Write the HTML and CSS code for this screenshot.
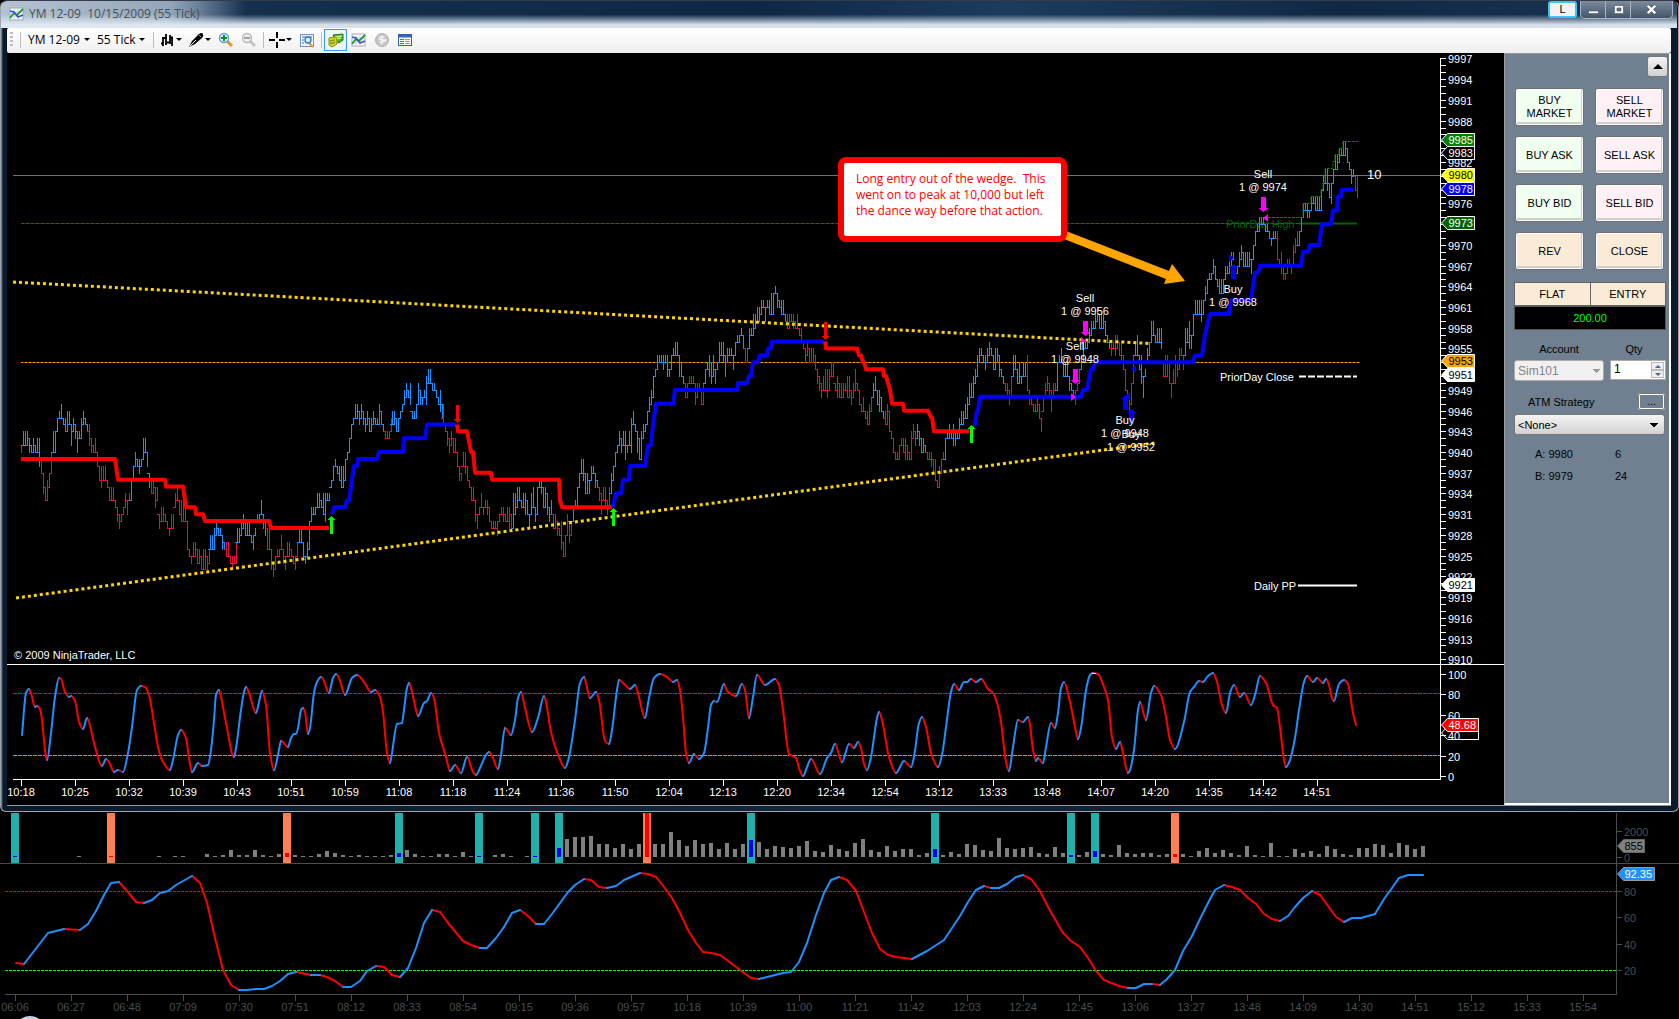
FILE: index.html
```html
<!DOCTYPE html>
<html lang="en">
<head>
<meta charset="utf-8" />
<title>YM 12-09 10/15/2009 (55 Tick)</title>
<link rel="stylesheet" href="styles.css">
</head>

<body>
<div class="window">
	<div class="titlebar">
		<svg class="icon" viewBox="0 0 16 16"><rect x="1" y="2" width="13" height="12" fill="#f4f8ff" stroke="#9ab"/><path d="M1 6h13M1 10h13M5 2v12M9 2v12" stroke="#c5d2ea"/><path d="M1 12l4-5 3 2 6-6" fill="none" stroke="#2a9a2a" stroke-width="2"/><path d="M1 5l4 1 4 5 5-2" fill="none" stroke="#3355cc" stroke-width="1.5"/></svg>
		<h1>YM 12-09&nbsp; 10/15/2009 (55 Tick)</h1>
		<button class="link-btn">L</button>
		<div class="win-btns">
			<button aria-label="Minimize"><svg viewBox="0 0 16 16"><rect x="2.500" y="9.500" width="11" height="3" fill="#fff" stroke="#555e70"/></svg></button>
			<button aria-label="Restore"><svg viewBox="0 0 16 16"><path d="M3.500 3.500h10v9h-10zM6.500 6.500h4v3h-4z" fill="#fff" fill-rule="evenodd" stroke="#555e70"/></svg></button>
			<button class="close" aria-label="Close"><svg viewBox="0 0 16 16"><path d="M4 4l8 8M12 4l-8 8" stroke="#555e70" stroke-width="4.500"/><path d="M4 4l8 8M12 4l-8 8" stroke="#fff" stroke-width="2.600"/></svg></button>
		</div>
	</div>
	<div class="toolbar">
		<span class="grip"></span>
		<span class="sep"></span>
		<button class="pick">YM 12-09<i class="caret"></i></button>
		<button class="pick">55 Tick<i class="caret"></i></button>
		<span class="sep"></span>
		<button class="tool drop" aria-label="Chart style"><svg class="icon" viewBox="0 0 16 16"><path d="M4 5v9M2 11.500h2M4 6h3M7 2v11M7 10.500h3M11 3v9M11 5.500h3M13 5v9" fill="none" stroke="#000" stroke-width="1.800"/></svg><i class="caret"></i></button>
		<button class="tool drop" aria-label="Drawing tools"><svg class="icon" viewBox="0 0 16 16"><path d="M1 15l3-6 7-7q3-2 4 0t-1 4l-7 6z" fill="#000"/><path d="M2 14l6-6" stroke="#fff"/><path d="M11 3l2 2" stroke="#888"/></svg><i class="caret"></i></button>
		<button class="tool" aria-label="Zoom in"><svg class="icon" viewBox="0 0 16 16"><path d="M9 9l5 5" stroke="#e8903c" stroke-width="3"/><circle cx="6" cy="6" r="4.500" fill="#dff2ff" stroke="#5aa0d8" stroke-width="1.400"/><path d="M6 3v6M3 6h6" stroke="#109018" stroke-width="2"/></svg></button>
		<button class="tool" aria-label="Zoom out"><svg class="icon" viewBox="0 0 16 16"><path d="M9 9l5 5" stroke="#c4c4c4" stroke-width="3"/><circle cx="6" cy="6" r="4.500" fill="#eee" stroke="#b8b8b8" stroke-width="1.400"/><path d="M3 6h6" stroke="#a0a0a0" stroke-width="2"/></svg></button>
		<span class="sep"></span>
		<button class="tool drop" aria-label="Cross hair"><svg class="icon" viewBox="0 0 16 16"><path d="M8 0v6M8 10v6M0 8h6M10 8h6" stroke="#000" stroke-width="2"/></svg><i class="caret"></i></button>
		<button class="tool" aria-label="Data box"><svg class="icon" viewBox="0 0 16 16"><rect x="1.500" y="2.500" width="13" height="12" fill="#eef4fc" stroke="#6b93c8"/><path d="M3 5h10M3 8h2M3 11h2" stroke="#3f6fb0"/><path d="M10 11l4 4" stroke="#e8903c" stroke-width="2"/><circle cx="9" cy="8" r="3" fill="#d8f0ff" stroke="#3c78b8" stroke-width="1.400"/></svg></button>
		<span class="sep"></span>
		<button class="tool active" aria-label="Chart trader"><svg class="icon" viewBox="0 0 16 16"><path d="M5 3l10-1v6l-4 3-3-2z" fill="#4cae22" stroke="#1d7d12"/><path d="M7 5l7-1M8 7l5-1" stroke="#c8f080" stroke-width="1.500"/><path d="M1 6l6-1 2 2v5l-5 3-3-2z" fill="#e8cc28" stroke="#8a8a10"/><path d="M2 9l5-1M2 11.500l5-1" stroke="#7aa818" stroke-width="1.500"/></svg></button>
		<button class="tool" aria-label="Indicators"><svg class="icon" viewBox="0 0 16 16"><rect x="1" y="2" width="13" height="12" fill="#fff" stroke="#aab"/><path d="M1 6h13M1 10h13M5 2v12M9 2v12" stroke="#c5d2ea"/><path d="M1 12l4-5 3 2 6-6" fill="none" stroke="#2a9a2a" stroke-width="2"/><path d="M1 5l4 1 4 5 5-2" fill="none" stroke="#3355cc" stroke-width="1.500"/></svg></button>
		<button class="tool" aria-label="Strategies" disabled><svg class="icon" viewBox="0 0 16 16"><circle cx="8" cy="8" r="6.500" fill="#c6c6c6" stroke="#b0b0b0"/><path d="M10.500 5.500q-5-1.500-5 .7t5 1.800-5 2.500M8 3.500v9" fill="none" stroke="#f4f4f4" stroke-width="1.400"/></svg></button>
		<button class="tool" aria-label="Properties"><svg class="icon" viewBox="0 0 16 16"><rect x="1.500" y="2.500" width="13" height="11" fill="#fff" stroke="#31609c"/><path d="M1 4h14" stroke="#2f66b8" stroke-width="3"/><path d="M3 7.500h4M3 9.500h4M3 11.500h4" stroke="#4a74b0"/><path d="M8 7.500h5M8 9.500h5M8 11.500h5" stroke="#b59a50"/></svg></button>
	</div>
	<div class="content">
		<div class="chart">
			<svg id="price" viewBox="7 53 1497 752" preserveAspectRatio="xMinYMin meet"></svg>
			<div class="callout">Long entry out of the wedge.&nbsp; This went on to peak at 10,000 but left the dance way before that action.</div>
		</div>
		<form class="trader">
			<button type="button" class="collapse" aria-label="Collapse"><i class="up"></i></button>
			<div class="orders">
				<button type="button" class="buy">BUY<br>MARKET</button>
				<button type="button" class="sell">SELL<br>MARKET</button>
				<button type="button" class="buy">BUY ASK</button>
				<button type="button" class="sell">SELL ASK</button>
				<button type="button" class="buy">BUY BID</button>
				<button type="button" class="sell">SELL BID</button>
				<button type="button">REV</button>
				<button type="button">CLOSE</button>
			</div>
			<div class="position"><span>FLAT</span><span>ENTRY</span></div>
			<div class="pnl">200.00</div>
			<div class="fields">
				<label for="account">Account</label>
				<label for="qty">Qty</label>
				<select id="account" disabled><option>Sim101</option></select>
				<div class="spin"><input id="qty" type="text" value="1"><span class="spin-btns"><button type="button" aria-label="More"><i class="up"></i></button><button type="button" aria-label="Less"><i class="caret"></i></button></span></div>
			</div>
			<div class="atm">
				<label for="atm">ATM Strategy</label>
				<button type="button" class="more">...</button>
			</div>
			<select id="atm"><option>&lt;None&gt;</option></select>
			<dl class="quotes">
				<dt>A: 9980</dt><dd>6</dd>
				<dt>B: 9979</dt><dd>24</dd>
			</dl>
		</form>
	</div>
</div>
<div class="back">
	<svg id="volume" viewBox="0 812 1679 207" preserveAspectRatio="xMinYMin meet"></svg>
</div>
<script src="script.js"></script>
</body>
</html>
```
FILE: styles.css
```css
* {box-sizing:border-box;margin:0;padding:0;}
body {background:#000;font-family:"Liberation Sans",Arial,sans-serif;font-size:11px;overflow:hidden;}
button, input, select {font:inherit;color:inherit;}
svg {display:block;}
.icon {width:16px;height:16px;}

/* window frame */
.window {padding:0 7px 5px 6px;background:linear-gradient(90deg,#8d99a6 0,#0b1a2b 2px,#14263b 50%,#0b1a2b 100%);border:1px solid #9aa5b1;border-top-color:#333c48;border-radius:7px 7px 6px 6px;}
.titlebar {display:flex;align-items:flex-start;height:27px;margin:0 -6px;padding-left:8px;border-radius:6px 6px 0 0;background:linear-gradient(180deg,rgba(255,255,255,0) 50%,rgba(225,234,244,.95) 88%),linear-gradient(90deg,#b4c3d2 0,#93a5b8 170px,#6f849c 195px,#14304f 245px,#0f2746 45%,#1c3c5d 60%,#102844 80%,#17314f 94%,#3c5068 100%);}
.titlebar .icon {margin-top:5px;}
.titlebar h1 {flex:1;margin:4px 0 0 4px;font:12px/18px "Open Sans",sans-serif;color:#45505c;}
.link-btn {width:29px;height:17px;margin-right:3px;background:#f2f2f4;border:2px solid #3cc4f2;border-radius:3px;line-height:11px;}
.win-btns {display:flex;height:18px;margin-right:4px;border:1px solid #aab4c0;border-top:0;border-radius:0 0 5px 5px;background:linear-gradient(#7d8b9c,#43546a);}
.win-btns button {display:flex;align-items:center;justify-content:center;width:25px;background:none;border:0;border-right:1px solid #aab4c0;}
.win-btns .close {width:41px;border:0;}
.win-btns svg {width:15px;height:15px;}

/* toolbar */
.toolbar {display:flex;align-items:center;height:25px;padding:0 0 2px 3px;background:linear-gradient(#fff,#efeff0);border-radius:2px;font:12px/16px "Open Sans",sans-serif;}
.toolbar button {display:flex;align-items:center;background:none;border:0;}
.grip {width:3px;height:15px;margin-right:4px;background:repeating-linear-gradient(#bbb 0,#bbb 2px,transparent 2px,transparent 4px);}
.sep {width:1px;height:16px;margin:0 2px 0 3px;background:#bcbcbc;}
.grip + .sep {margin-right:7px;}
.caret, .up {width:0;height:0;border:3px solid transparent;border-top:3px solid #000;border-bottom:0;}
.up {border-top:0;border-bottom:3px solid #000;}
.toolbar .pick {gap:4px;height:20px;margin-right:7px;}
.pick + .sep {margin-left:1px;}
.tool {justify-content:center;width:23px;height:22px;}
.tool.drop {width:29px;gap:1px;}
.toolbar .active {background:#edf5fd;border:1px solid #3399ff;}

.content {display:flex;border-bottom:1px solid #8f99a5;}
.chart {position:relative;flex:1;min-width:0;background:#000;}
.chart svg, .back svg {width:100%;}
svg text {font-family:"Liberation Sans",Arial,sans-serif;font-size:11px;fill:#fff;}
.callout {position:absolute;left:831px;top:104px;width:229px;height:85px;padding:8px 12px;background:#fff;border:6px solid #f00;border-radius:8px;color:#f00;font:12px/16px "Open Sans",sans-serif;}

/* chart trader */
.trader {display:flex;flex-direction:column;width:167px;padding:2px 1px 0 9px;background:#708090;border:1px solid #9b9b9b;border-right:2px solid #fff;border-bottom:2px solid #fff;}
.collapse {align-self:flex-end;display:flex;align-items:center;justify-content:center;width:21px;height:21px;border:1px solid #777;border-radius:3px;background:linear-gradient(#f4f4f4,#d0d0d0);}
.collapse .up {border-width:0 5px 5px;}
.orders {display:grid;grid-template-columns:69px 69px;gap:10px 11px;margin:11px 0 0 1px;}
.orders button {height:38px;background:#faebd7;border:1px solid #6d7175;border-radius:3px;box-shadow:inset 0 0 0 1px #fff,inset -1px -2px 0 1px #d0cdca;line-height:13px;}
.orders .buy {background:#f0fff0;}
.orders .sell {background:#fff0f5;}
.position {display:flex;width:152px;margin-top:12px;border:1px solid #666;background:#faebd7;}
.position span {flex:1;line-height:22px;text-align:center;}
.position span + span {border-left:1px solid #666;}
.pnl {width:152px;height:24px;border:1px solid #555;background:#000;color:#0f0;line-height:22px;text-align:center;}
.fields {display:grid;grid-template-columns:90px 56px;gap:4px 6px;margin-top:12px;}
.fields label {line-height:14px;text-align:center;}
.fields label + label {padding-right:8px;}
select {appearance:none;width:100%;height:21px;padding-left:3px;border:1px solid #777;border-radius:3px;background:linear-gradient(45deg,transparent 50%,#000 50%) right 10px center/4px 4px no-repeat,linear-gradient(-45deg,transparent 50%,#000 50%) right 6px center/4px 4px no-repeat,linear-gradient(#f4f4f4,#d2d2d2);}
select:disabled {border-color:#aaa;background:linear-gradient(45deg,transparent 50%,#999 50%) right 7px center/4px 4px no-repeat,linear-gradient(-45deg,transparent 50%,#999 50%) right 3px center/4px 4px no-repeat,#f0f0f0;color:#838383;opacity:1;font-size:12px;}
.spin {display:flex;height:20px;padding:1px;background:#fff;border:1px solid #aaa;}
.spin input {flex:1;min-width:0;padding:0 0 3px 2px;border:0;outline:0;font-size:12px;}
.spin-btns {display:flex;flex-direction:column;width:13px;}
.spin-btns button {flex:1;display:flex;align-items:center;justify-content:center;border:1px solid #bbb;background:#eee;}
.spin-btns .up {border-bottom-color:#46a;}
.spin-btns .caret {border-top-color:#46a;}
.atm {display:flex;justify-content:space-between;align-items:center;width:151px;height:17px;margin:12px 0 4px;padding:0 0 0 14px;}
.more {width:27px;height:17px;background:#708090;border:2px solid #fff;border-radius:3px;outline:1px solid #777;outline-offset:-1px;line-height:9px;}
#atm {width:151px;}
.quotes {display:grid;grid-template-columns:80px auto;row-gap:8px;margin:12px 0 0 21px;line-height:14px;}
.back {background:#000;}
```
FILE: script.js
```js
var NS = 'http://www.w3.org/2000/svg';
var BLUE = '#1e90ff', CRIMSON = '#dc143c';

function add(svg, tag, attrs, text) {
	var el = document.createElementNS(NS, tag);
	for (var k in attrs) el.setAttribute(k, attrs[k]);
	if (text !== undefined) el.textContent = text;
	svg.appendChild(el);
	return el;
}
function line(svg, x1, y1, x2, y2, color, width, dash) {
	var a = {x1: x1, y1: y1, x2: x2, y2: y2, stroke: color, 'stroke-width': width || 1};
	if (dash) a['stroke-dasharray'] = dash;
	return add(svg, 'line', a);
}
function label(svg, x, y, text, anchor, color) {
	return add(svg, 'text', {x: x, y: y, 'text-anchor': anchor || 'start', style: 'fill:' + (color || '#fff')}, text);
}
function nums(s) {
	return s.trim().split(/[\s,]+/).map(Number);
}
// price is given without the leading 99
function py(p) {
	return 362.3 - (p - 53) * 6.905;
}

// colour, start x, high+low pairs
var bars = [
['r', 21, '4140'],
['b', 23, '4341 4341 4341 4240 4140 4240 4140 4240 4238'],
['r', 41, '3937 3734 3533 3633 3735 4037 4140'],
['b', 53, '4340 4543 4645 4745 4544 4543 4643 4644 4441 4543 4442 4340 4342 4542 4644 4544 4443'],
['r', 89, '4441 4240 4140 4240 4038 3836 3835 3836 3836 3635 3533 3533 3533 3332 3230 3129 3130 3231 3432 3331 3433'],
['b', 131, '3633 3836 4038 3938 3937 3938 4239 4240 4038 3735'],
['r', 151, '3634 3532 3533 3129 3230 3130 3029 2928 3129 3432 3533 3331 3330 3330 3026 2625 2524 2725 2624 2624 2523 2623 2523 2624'],
['b', 210, '2826 2926 3028 2928 2826 2726'],
['r', 226, '2725 2524 2523 2524 2724'],
['b', 237, '2927 3028 3129 3028 3028 2827 2826 2928 3130 3331 3129 3028'],
['r', 267, '2926 2623 2422 2523 2625 2826 2624 2523 2725 2625 2524 2523 2725'],
['b', 299, '2927 2725 2524 2725 3026 3230 3231 3432 3432 3332 3431 3430 3433 3635 3836 3938 3837 3836 3835 3936 4039 4240 4442 4544 4745 4644 4745 4644 4543 4644 4543 4644 4544 4544 4744 4644 4443'],
['r', 385, '4342 4342 4543'],
['b', 392, '4644 4543 4543 4645 4746 4947 5048 4948 5047 4645 4745 5047 4947 4847 4948 5147 5250 5250 5049 4948 4847 4946 4745'],
['r', 443, '4744 4443 4341 4240 4341 4240 4240 4038 3836 3736 4038 4037 3836 3635 3533 3533 3330 3129 3231 3432 3231 3332 3331 3230 3029 3029 3029 3028 3130 3231 3230 3130 3230 3229 3129'],
['b', 513, '3429 3431 3532 3533 3332 3432 3431 3331 3129 3431 3532 3230 3531 3635 3634 3532 3532 3431 3230 3331'],
['r', 553, '3129 3129 3028 2928 3026 2725 2825 3128 3027 3028'],
['b', 573, '3230 3332 3532 3735 3937 3936 3734 3734 3634 3836 3837 3735 3635'],
['r', 599, '3533 3431 3533 3532 3331 3532'],
['b', 611, '3734 3836 4038 4140 4341 4240 4341 4339 4140 4341 4540 4644 4443 4340 4239 4339 4442 4443 4644 4846 4947 5148 5251 5452 5453 5453 5452 5453 5451 5251 5452 5554 5654 5654 5451 5351 5150'],
['r', 685, '5048 5048 5150 5150 5150 5047 5048 5049 4947 5047'],
['b', 705, '5250 5352 5451 5350 5451 5250 5352 5653 5654 5653 5451 5553 5554 5554 5452 5654 5756 5756 5857 5755'],
['r', 745, '5553 5553'],
['b', 749, '5855 5857 6057 6058 6159 6159 6260 6261 6159 6261 6260 6360 6360 6463 6361 6261 6260 6260 6059'],
['r', 787, '6058 6058 6059 6058 5958 6058 5857 5856 5655 5553 5654 5553 5553 5553 5452 5250 5149 5048 5149 5249 5248 5249 5351 5350 5049 5148 5048 5048 5048 5049 5148 5249 4947 5048 5249 5049 4947 4746 4846 4645 4644 4744 4846'],
['b', 873, '5048 5149 4947 4946 4846 4645'],
['r', 885, '4644 4744 4643 4342 4240 4039 4039 4139 4241 4240 4239 4139 4039 4339 4442 4341'],
['b', 917, '4442 4341 4240 4240 4140'],
['r', 927, '4039 4039 4038 3937 3936 3635 3835 3937 4039'],
['b', 945, '4239 4342 4442 4342 4441 4341 4342 4542 4644 4644 4745 4845 5047 5048 5148 5250 5451 5553 5554 5453 5452 5553 5654 5554 5452 5552 5553 5451 5251 5150'],
['r', 1005, '5049 5048 4947 5148'],
['b', 1013, '5451 5452 5250 5350 5150 5351 5351'],
['r', 1027, '5449 4947 4847 4746 4746 4846 4745 4543 4846 5048 5149 5048 4946 5048 5049'],
['b', 1057, '5349 5453 5553 5351 5351 5351 5149 5049 4948'],
['r', 1075, '4947 5049 5250'],
['b', 1081, '5452 5653 5655 5655 5856 5957 5958 6058 6159 6058 6058 6058 5957 5756 5655'],
['r', 1111, '5654 5655 5754 5755 5654 5653 5452 5249 4948 4846 5047 5450'],
['b', 1135, '5654 5754 5452 5450 5148 5251 5553 5654 5956 5957 5756 5856 5856 5855'],
['r', 1163, '5351 5451 5451 5350 5048 5250 5450 5351 5552 5554 5452'],
['b', 1185, '5854 5856 5955 5755 6057 6260 6260 6260 6259 6260 6462 6563 6665 6766 6866 6765 6564 6563 6563 6563 6765 6766 6866 6967 6968 6766 6866 6967 7068 6967 6967 6967 6967 6866 7068 7270 7372 7472 7473 7473 7372 7372 7271 7170 7271 7271'],
['r', 1277, '7268 6867 6966 6765 6665 6866 6867 6766 7067 7169 7270'],
['b', 1299, '7270 7472 7674 7675 7674 7574 7775 7776 7775 7775 7775 7875 8078 8179 8178 7977 7976 8179 8381 8381 8482 8483 8583 8583 8482 8281 8179 8180'],
['r', 1355, '8078 8077'],
['', 1359, '']
];

// moving average: x, price
var trend = [
['#f00', '21,39 115,39 118,36 165,36 166,35 183,35 186,32 195,32 196,31 203,31 205,30 269,30 271,29 329,29'],
['#00f', '332,31 334,32 345,32 347,33 349,33 353,37 354,38 357,38 358,39 377,39 379,40 403,40 404,42 425,42 427,44 456,44'],
['#f00', '457,44 458,43 467,43 471,40 473,40 475,37 491,37 492,36 559,36 560,33 562,32 612,32'],
['#00f', '613,32 616,34 621,34 623,36 629,36 630,38 645,38 647,40 648,41 651,41 653,44 654,45 656,47 673,47 675,49 737,49 738,50 747,50 749,51 751,51 753,53 758,53 760,54 767,54 768,55 771,55 772,56 824,56'],
['#f00', '825,56 826,55 857,55 859,54 861,54 863,53 864,53 866,52 883,52 884,51 886,51 890,49 892,47 903,47 904,46 928,46 931,45 932,45 934,43 969,43'],
['#00f', '973,44 975,44 977,46 978,46 980,48 1081,48 1083,49 1087,49 1091,52 1093,52 1095,53 1193,53 1195,54 1202,54 1205,57 1210,60 1229,60 1231,62 1251,62 1255,66 1258,66 1260,67 1301,67 1303,69 1308,69 1310,70 1319,70 1322,73 1331,73 1333,75 1337,75 1338,77 1341,77 1342,78 1354,78']
];

var stoch = '22,735 26,693 29,689 31,693 35,707 37,706 40,709 42,720 45,750 47,760 51,733 55,697 59,678 61,679 65,692 69,697 71,696 75,701 79,722 83,729 87,718 89,722 95,747 102,766 106,759 109,762 114,772 118,770 123,772 128,753 132,727 137,690 141,686 145,687 149,695 154,723 158,747 162,760 170,770 173,760 178,735 181,730 186,738 189,758 192,772 198,763 202,766 208,765 211,750 214,720 216,695 219,690 221,697 226,723 234,757 236,748 241,710 244,692 246,687 249,693 256,713 259,702 262,691 266,705 270,753 274,770 278,755 281,741 288,747 291,738 294,734 296,734 298,728 301,710 303,708 305,712 308,734 310,728 314,693 317,682 321,677 323,679 329,693 333,678 336,674 339,678 345,695 352,678 357,675 364,682 371,692 375,690 380,697 383,712 387,753 390,763 392,753 397,724 402,723 404,710 407,688 409,683 411,688 416,710 418,716 424,703 427,701 431,693 434,698 439,733 446,757 450,771 455,765 461,773 467,757 473,772 476,775 480,768 486,755 489,752 492,756 498,769 501,755 505,728 511,735 515,720 518,698 521,692 525,708 532,732 538,718 544,696 ' +
'546,702 551,732 559,757 565,768 569,757 575,720 580,683 584,677 586,683 590,698 596,692 599,700 605,741 609,744 612,730 617,690 619,680 626,686 630,689 635,685 638,693 645,718 649,698 654,678 660,674 667,677 673,682 677,680 680,690 683,717 686,753 689,763 694,754 699,759 704,753 708,728 711,705 714,701 717,702 724,684 727,691 736,696 742,684 745,690 749,718 753,697 757,675 765,685 775,679 779,685 783,710 789,754 796,758 799,768 803,776 807,767 811,759 820,774 827,758 831,753 835,744 842,762 849,744 854,748 858,742 861,748 864,764 867,770 871,757 877,718 879,712 882,720 889,757 896,773 904,761 911,767 914,757 919,723 922,717 926,727 931,753 938,767 942,755 946,727 951,692 954,684 959,690 964,682 967,682 971,679 976,682 981,679 988,689 993,693 997,703 1001,722 1006,762 1009,771 1013,747 1018,720 1023,722 1028,717 1030,725 1033,750 1036,761 1038,758 1043,763 1046,747 1051,723 1055,728 1058,713 1061,688 1064,682 1070,702 1076,732 1078,739 1081,728 1086,690 1090,675 ' +
'1093,673 1098,674 1104,687 1108,700 1112,737 1116,749 1120,742 1123,753 1128,773 1130,770 1134,750 1138,710 1140,702 1146,720 1151,693 1154,686 1161,695 1166,717 1170,740 1175,749 1184,722 1190,692 1194,687 1199,681 1203,682 1208,676 1213,673 1217,682 1222,705 1226,713 1230,693 1234,685 1240,697 1244,693 1251,705 1255,695 1260,676 1266,683 1273,705 1277,708 1280,727 1284,760 1286,767 1290,760 1295,738 1299,710 1304,682 1307,676 1313,682 1317,678 1323,683 1326,679 1329,685 1332,698 1334,701 1339,684 1344,680 1348,684 1353,713 1356,725';

var stoch2 = '16,963 24,964 48,933 64,929 80,930 88,924 96,911 104,895 111,883 119,882 127,891 136,902 144,903 152,900 160,893 168,891 176,885 192,876 200,883 207,903 215,938 223,970 231,985 239,990 247,990 256,989 264,989 272,986 280,981 288,974 296,972 311,975 320,975 327,977 335,981 343,987 351,987 360,981 367,971 376,966 384,967 392,975 400,977 408,968 416,948 424,923 432,910 440,912 448,923 463,941 471,945 480,948 487,948 496,938 504,927 512,913 520,910 528,916 536,924 544,924 552,914 568,892 575,885 584,879 591,880 599,887 607,888 616,886 624,880 640,873 648,874 656,877 664,887 672,898 680,913 688,930 696,943 703,952 711,953 720,955 727,960 736,967 744,973 751,978 759,979 775,975 783,973 791,972 799,962 807,943 816,915 824,893 831,880 839,877 ' +
'847,880 856,891 864,912 872,933 880,949 888,955 896,957 912,959 927,951 944,940 952,928 960,916 968,902 976,890 984,886 991,888 999,888 1007,884 1016,877 1023,875 1031,879 1040,891 1048,907 1056,921 1063,933 1071,941 1080,947 1088,958 1096,971 1104,980 1119,986 1128,988 1136,988 1144,984 1152,984 1160,985 1167,979 1175,970 1183,951 1192,936 1200,919 1208,903 1215,890 1224,885 1232,887 1240,890 1248,898 1256,904 1264,914 1272,919 1280,921 1288,916 1295,907 1303,898 1312,891 1320,895 1328,906 1336,917 1344,922 1352,918 1361,918 1375,914 1384,899 1392,888 1399,878 1408,875 1423,875';

var volumes = nums('1 0 0 0 0 0 0 0 1 0 0 0 1 0 0 0 0 0 1 0 1 1 0 0 3 1 2 7 2 2 7 2 1 3 4 2 1 1 3 6 4 2 1 2 1 1 1 2 4 7 3 1 1 3 3 1 5 1 1 0 2 3 1 0 1 1 0 0 9 18 20 20 21 13 13 9 13 8 13 44 13 13 25 17 11 17 13 14 8 14 8 13 17 15 8 11 10 9 11 16 6 5 12 8 6 14 18 7 5 11 6 8 8 2 4 8 2 5 3 13 12 7 6 19 9 8 9 10 4 3 10 4 2 2 5 6 3 2 12 4 3 4 4 2 3 3 3 1 6 9 4 7 4 2 11 2 1 14 1 1 8 4 6 3 11 8 3 2 9 9 13 12 4 14 12 8 11');
var strips = {0: 't', 12: 'c', 34: 'c', 48: 't', 58: 't', 65: 't', 68: 't', 79: 'c', 92: 't', 115: 't', 132: 't', 135: 't', 145: 'c'};

function drawBars(svg) {
	var prev = null;
	for (var s = 0; s < bars.length - 1; s++) {
		var x0 = bars[s][1], x1 = bars[s + 1][1], list = bars[s][2].split(' '), d = '';
		for (var x = x0; x < x1; x += 2) {
			var v = list[Math.floor((x - x0) / (x1 - x0) * list.length)];
			var hi = +v.slice(0, 2), lo = +v.slice(2), px = Math.round(x) + 0.5;
			if (prev) {
				// join neighbours at the open of the new bar
				var lv = hi >= prev.hi ? Math.max(lo, prev.lo) : hi;
				lv = Math.min(lv, Math.max(prev.hi, lo));
				var ly = Math.round(py(lv)) + 0.5;
				d += 'M' + (px - 2.5) + ' ' + ly + 'H' + (px + 0.5);
			}
			d += 'M' + px + ' ' + Math.round(py(hi)) + 'V' + (Math.round(py(lo)) + 1);
			prev = {hi: hi, lo: lo};
		}
		add(svg, 'path', {d: d, fill: 'none', stroke: bars[s][0] === 'b' ? BLUE : CRIMSON, 'stroke-width': 1});
	}
}

// rising parts blue, falling parts red, rounded at the turns
function drawOsc(svg, data, smooth) {
	var n = nums(data), pts = [], i;
	for (i = 0; i < n.length; i += 2) pts.push([n[i], n[i + 1]]);
	function slope(i) {
		return (pts[i + 1][1] - pts[i][1]) / (pts[i + 1][0] - pts[i][0]);
	}
	function tangent(i) {
		if (i === 0 || i === pts.length - 1) return slope(i ? i - 1 : 0);
		var a = slope(i - 1), b = slope(i);
		return a * b <= 0 ? 0 : 2 * a * b / (a + b);
	}
	var up = '', down = '';
	for (i = 0; i < pts.length - 1; i++) {
		var p = pts[i], q = pts[i + 1], h = (q[0] - p[0]) / 3, d = 'M' + p;
		d += smooth ? 'C' + (p[0] + h) + ' ' + (p[1] + tangent(i) * h) + ' ' + (q[0] - h) + ' ' + (q[1] - tangent(i + 1) * h) + ' ' + q : 'L' + q;
		if (q[1] > p[1]) down += d; else up += d;
	}
	add(svg, 'path', {d: down, fill: 'none', stroke: '#f00', 'stroke-width': 2, 'stroke-linecap': 'round'});
	add(svg, 'path', {d: up, fill: 'none', stroke: BLUE, 'stroke-width': 2, 'stroke-linecap': 'round'});
}

function arrow(svg, x, tip, dir, color, w) {
	var b = tip + dir * 4, e = tip + dir * (w > 3 ? 15 : 18), s = w > 3 ? 5 : 4;
	add(svg, 'path', {d: 'M' + x + ' ' + tip + 'L' + (x - s) + ' ' + b + 'H' + (x - w / 2) + 'V' + e + 'H' + (x + w / 2) + 'V' + b + 'H' + (x + s) + 'Z', fill: color});
}
function tri(svg, x, y, dir, color) {
	add(svg, 'path', {d: 'M' + x + ' ' + (y - 4) + 'L' + (x + dir * 5) + ' ' + y + 'L' + x + ' ' + (y + 4) + 'Z', fill: color});
}
function tag(svg, x, y, w, text, bg, fg, border) {
	add(svg, 'path', {d: 'M' + x + ' ' + y + 'l6 -6.5h' + (w - 6) + 'v13h-' + (w - 6) + 'z', fill: bg, stroke: border || '#fff'});
	if (text) label(svg, x + 7, y + 4, text, 'start', fg);
}
function trade(svg, x, y, side, price) {
	label(svg, x, y, side, 'middle');
	label(svg, x, y + 13, '1 @ ' + price, 'middle');
}

function drawPrice() {
	var svg = document.getElementById('price'), i, y;
	line(svg, 13, 175.5, 1440, 175.5, '#808000');
	line(svg, 21, 223.5, 1299, 223.5, '#003c00');
	line(svg, 21, 223.5, 1299, 223.5, '#008000', 1, '3 2');
	line(svg, 21, 362.5, 1360, 362.5, '#8a5a00');
	line(svg, 21, 362.5, 1360, 362.5, '#ffa500', 1, '2 2');
	label(svg, 1226, 228, 'PriorDay High', 'start', '#006400');
	line(svg, 1299, 223.5, 1357, 223.5, '#006400', 2);
	drawBars(svg);
	add(svg, 'path', {d: 'M1260 217.500H1303V203.500H1311V196.500H1321V189.500H1323V182.500H1325V168.500H1333V161.500H1335V154.500H1339V148.500H1343V141.500H1358', fill: 'none', stroke: '#008000', 'stroke-dasharray': '3 1'});
	trend.forEach(function (t) {
		var n = nums(t[1]), d = '';
		for (i = 0; i < n.length; i += 2) d += (i ? 'L' : 'M') + n[i] + ' ' + py(n[i + 1]);
		add(svg, 'path', {d: d, fill: 'none', stroke: t[0], 'stroke-width': 4, 'stroke-linejoin': 'round'});
	});
	line(svg, 13, 282, 1150, 343.5, '#ffd700', 3, '3 3');
	line(svg, 16, 598, 1155, 443, '#ffd700', 3, '3 3');

	arrow(svg, 331.5, 516, 1, '#0f0', 3);
	arrow(svg, 613.5, 508, 1, '#0f0', 3);
	arrow(svg, 971.5, 425, 1, '#0f0', 3);
	arrow(svg, 457.5, 423, -1, '#f00', 3);
	arrow(svg, 825.5, 340, -1, '#f00', 3);
	arrow(svg, 1085.5, 336, -1, '#f0f', 5);
	arrow(svg, 1075.5, 384, -1, '#f0f', 5);
	arrow(svg, 1263.5, 212, -1, '#f0f', 5);
	arrow(svg, 1125.5, 395, 1, '#00f', 5);
	arrow(svg, 1131.5, 409, 1, '#00f', 5);
	arrow(svg, 1233.5, 264, 1, '#00f', 5);
	tri(svg, 1081, 341, 1, '#f0f');
	tri(svg, 1071, 397, 1, '#f0f');
	tri(svg, 1268, 218, -1, '#f0f');
	tri(svg, 1229, 258, 1, '#00f');
	tri(svg, 1136, 369, -1, '#00f');
	tri(svg, 1130, 396, -1, '#00f');
	trade(svg, 1085, 302, 'Sell', 9956);
	trade(svg, 1075, 350, 'Sell', 9948);
	trade(svg, 1263, 178, 'Sell', 9974);
	trade(svg, 1233, 293, 'Buy', 9968);
	trade(svg, 1125, 424, 'Buy', 9948);
	trade(svg, 1131, 438, 'Buy', 9952);
	add(svg, 'text', {x: 1367, y: 179, style: 'font-size:13px'}, '10');
	label(svg, 1220, 381, 'PriorDay Close');
	line(svg, 1299, 376.5, 1357, 376.5, '#fff', 2, '7 2');
	label(svg, 1254, 590, 'Daily PP');
	line(svg, 1298, 585.5, 1357, 585.5, '#fff', 2);
	label(svg, 14, 659, '\u00a9 2009 NinjaTrader, LLC');

	// big arrow from the note
	add(svg, 'path', {d: 'M1066 231L1169 271L1172 264L1185 281L1164 284L1166 279L1064 239Z', fill: '#ffa500'});

	// oscillator
	line(svg, 7, 664.5, 1504, 664.5, '#fff');
	line(svg, 13, 693.5, 1440, 693.5, '#f00', 1, '4 1');
	line(svg, 13, 755.5, 1440, 755.5, '#0f0', 1, '4 1');
	drawOsc(svg, stoch, true);
	line(svg, 1092, 673.5, 1096, 673.5, '#ff0', 1);

	// axes
	line(svg, 1440.5, 58, 1440.5, 780, '#fff');
	line(svg, 13, 779.5, 1441, 779.5, '#fff');
	for (i = 10; i <= 97; i++) {
		y = Math.round(py(i)) + 0.5;
		line(svg, 1441, y, 1446, y, '#fff');
		if ((i - 10) % 3 === 0) label(svg, 1448, y + 4, 9900 + i);
	}
	for (i = 0; i <= 100; i += 20) {
		y = Math.round(776 - i * 1.025) + 0.5;
		line(svg, 1441, y, 1446, y, '#fff');
		label(svg, 1448, y + 4, i);
	}
	var times = '10:18 10:25 10:32 10:39 10:43 10:51 10:59 11:08 11:18 11:24 11:36 11:50 12:04 12:13 12:20 12:34 12:54 13:12 13:33 13:48 14:07 14:20 14:35 14:42 14:51'.split(' ');
	times.forEach(function (t, i) {
		line(svg, 21.5 + i * 54, 780, 21.5 + i * 54, 786, '#fff');
		label(svg, 21 + i * 54, 796, t, 'middle');
	});
	tag(svg, 1441.5, 140, 33, '9985', '#008000');
	tag(svg, 1441.5, 153, 33, '9983', '#000');
	tag(svg, 1441.5, 175, 33, '9980', '#ff0', '#000');
	tag(svg, 1441.5, 189, 33, '9978', '#00f');
	tag(svg, 1441.5, 223, 33, '9973', '#006400');
	tag(svg, 1441.5, 361, 33, '9953', '#ffa500', '#000');
	tag(svg, 1441.5, 375, 33, '9951', '#fff', '#000');
	tag(svg, 1441.5, 585, 33, '9921', '#fff', '#000');
	tag(svg, 1441.5, 733, 37, '', 'none');
	tag(svg, 1441.5, 725, 37, '48.68', '#f00');
}

function drawBack() {
	var svg = document.getElementById('volume'), gray = '#465050', i, x;
	volumes.forEach(function (v, i) {
		x = 15 + i * 8;
		var s = strips[i];
		if (s) add(svg, 'rect', {x: x - 4, y: 813, width: 8, height: 50, fill: s === 't' ? '#20b2aa' : '#ff7f50'});
		if (v) add(svg, 'rect', {x: x - 2, y: 857 - v, width: 4, height: v, fill: s ? (s === 't' ? '#00f' : '#f00') : '#808080'});
	});
	line(svg, 0, 863.5, 1679, 863.5, gray);
	line(svg, 5, 891.5, 1616, 891.5, '#f00', 1, '3 1');
	line(svg, 5, 970.5, 1616, 970.5, '#0f0', 1, '3 1');
	drawOsc(svg, stoch2, false);
	line(svg, 5, 994.5, 1617, 994.5, gray);
	line(svg, 1616.5, 813, 1616.5, 995, gray);
	var times = '06:06 06:27 06:48 07:09 07:30 07:51 08:12 08:33 08:54 09:15 09:36 09:57 10:18 10:39 11:00 11:21 11:42 12:03 12:24 12:45 13:06 13:27 13:48 14:09 14:30 14:51 15:12 15:33 15:54'.split(' ');
	times.forEach(function (t, i) {
		line(svg, 15.5 + i * 56, 995, 15.5 + i * 56, 1001, gray);
		label(svg, 15 + i * 56, 1011, t, 'middle', gray);
	});
	[[831, 2000], [857, 0], [891, 80], [917, 60], [944, 40], [970, 20]].forEach(function (m) {
		line(svg, 1617, m[0] + 0.5, 1622, m[0] + 0.5, gray);
		label(svg, 1624, m[0] + 5, m[1], 'start', gray);
	});
	tag(svg, 1617.5, 846, 27, '855', '#808080', '#000', '#666');
	tag(svg, 1617.5, 874, 37, '92.35', BLUE, '#fff', '#999');
	add(svg, 'circle', {cx: 30, cy: 1032, r: 16, fill: '#c6d4e2'});
}

drawPrice();
drawBack();
```
